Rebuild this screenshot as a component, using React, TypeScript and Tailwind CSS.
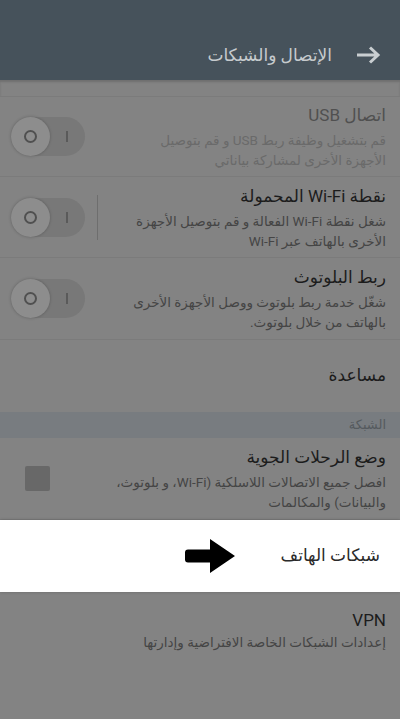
import React from "react";

const font = { fontFamily: 'Roboto, "DejaVu Sans", sans-serif' };

function Toggle() {
  return (
    <div dir="ltr" className="relative flex h-[39px] w-[74px] shrink-0 items-center rounded-full bg-[#787878]">
      <div className="flex h-[39px] w-[39px] items-center justify-center rounded-full bg-[#8d8d8d] shadow-[0_0_3px_rgba(0,0,0,0.25)]">
        <div className="h-[13px] w-[13px] rounded-full border-2 border-[#505050]" />
      </div>
      <div className="ml-[16px] h-[11px] w-[2px] bg-[#5a5a5a]" />
    </div>
  );
}

function Row({
  title,
  sub,
  control,
  divider,
  dim,
  h,
}: {
  title: string;
  sub?: string[];
  control?: React.ReactNode;
  divider?: boolean;
  dim?: boolean;
  h: string;
}) {
  return (
    <div className={`flex items-center border-b border-[#7b7b7b] pr-[14px] pl-[11px] ${h}`}>
      <div className="flex-1">
        <div className={`text-[17px] leading-[24px] ${dim ? "text-[#505050]" : "text-[#1c1c1c]"}`}>{title}</div>
        {sub && (
          <div className={`mt-[3px] text-[13.5px] leading-[20px] ${dim ? "text-[#6a6a6a]" : "text-[#454545]"}`}>
            {sub.map((s) => (
              <div key={s}>{s}</div>
            ))}
          </div>
        )}
      </div>
      {divider && <div className="ml-[12px] h-[45px] w-px bg-[#6e6e6e]" />}
      {control}
    </div>
  );
}

export default function App() {
  return (
    <div dir="rtl" className="h-[719px] w-[400px] overflow-hidden bg-[#838383]" style={font}>
      <div className="flex h-[80px] items-end bg-[#46525b] pb-[13px] pr-[19px]">
        <svg width="25" height="18" viewBox="0 0 25 18" className="mb-[3px] shrink-0">
          <path d="M1 9 H22 M14 1.5 L22 9 L14 16.5" fill="none" stroke="#c9ced1" strokeWidth="3" />
        </svg>
        <span className="mr-[24px] text-[17px] leading-[24px] text-[#c6cbce]">الإتصال والشبكات</span>
      </div>
      <div className="h-[17px] border-b border-[#7b7b7b] shadow-[inset_0_2px_2px_rgba(0,0,0,0.15)]" />
      <Row
        h="h-[80px]"
        dim
        title="اتصال USB"
        sub={["قم بتشغيل وظيفة ربط USB و قم بتوصيل", "الأجهزة الأخرى لمشاركة بياناتي"]}
        control={<Toggle />}
      />
      <Row
        h="h-[81px]"
        title="نقطة Wi-Fi المحمولة"
        sub={["شغل نقطة Wi-Fi الفعالة و قم بتوصيل الأجهزة", "الأخرى بالهاتف عبر Wi-Fi"]}
        divider
        control={<Toggle />}
      />
      <Row
        h="h-[82px]"
        title="ربط البلوتوث"
        sub={["شغّل خدمة ربط بلوتوث ووصل الأجهزة الأخرى", "بالهاتف من خلال بلوتوث."]}
        control={<Toggle />}
      />
      <div className="flex h-[72px] items-center pr-[14px] text-[17px] text-[#1c1c1c]">مساعدة</div>
      <div className="flex h-[26px] items-center bg-[#787c80] pr-[14px] text-[13px] text-[#555a5e]">الشبكة</div>
      <Row
        h="h-[82px]"
        title="وضع الرحلات الجوية"
        sub={["افصل جميع الاتصالات اللاسلكية (Wi-Fi، و بلوتوث،", "والبيانات) والمكالمات"]}
        control={<div className="ml-[14px] h-[25px] w-[25px] rounded-[2px] bg-[#686868]" />}
      />
      <div className="flex h-[72px] items-center bg-white pr-[20px] shadow-[0_0_3px_rgba(0,0,0,0.2)]">
        <span className="text-[17px] text-[#2a2a2a]">شبكات الهاتف</span>
        <svg className="mr-[46px] shrink-0" width="50" height="34" viewBox="0 0 50 34">
          <path d="M3 10.5 H25 V0 L50 17 L25 34 V23.5 H3 Q0 23.5 0 20.5 V13.5 Q0 10.5 3 10.5 Z" fill="#000" />
        </svg>
      </div>
      <div className="pt-[16px] pr-[14px]">
        <div className="text-[17px] leading-[24px] text-[#1c1c1c]">VPN</div>
        <div className="text-[13.5px] leading-[20px] text-[#454545]">إعدادات الشبكات الخاصة الافتراضية وإدارتها</div>
      </div>
    </div>
  );
}
